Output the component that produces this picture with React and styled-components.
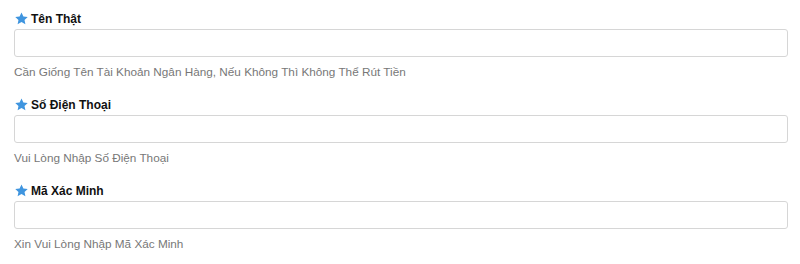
import styled, { createGlobalStyle } from "styled-components";

const Global = createGlobalStyle`
  body {
    margin: 0;
    background: #ffffff;
    font-family: "Liberation Sans", Arial, Helvetica, sans-serif;
  }
`;

const Form = styled.form`
  padding: 11px 12px 0 14px;
  display: flex;
  flex-direction: column;
`;

const Field = styled.div`
  display: flex;
  flex-direction: column;
  margin-bottom: 17px;
`;

const Label = styled.label`
  display: flex;
  align-items: center;
  gap: 3px;
  height: 16px;
  font-size: 12px;
  font-weight: bold;
  color: #111;
  svg {
    width: 13px;
    height: 13px;
    margin-left: 1px;
    margin-top: -1px;
  }
`;

const Input = styled.input`
  box-sizing: border-box;
  margin-top: 2px;
  width: 100%;
  height: 28px;
  border: 1px solid #d6d6d6;
  border-radius: 3px;
  padding: 0 8px;
  font-size: 12px;
  font-family: inherit;
  outline: none;
`;

const Help = styled.p`
  margin: 7px 0 0;
  line-height: 16px;
  font-size: 11.75px;
  color: #777;
`;

const Star = () => (
  <svg viewBox="0 0 24 24">
    <path
      fill="#3f95df"
      d="M12 .8l3.5 7.3 8 1-5.9 5.5 1.6 7.9L12 18.6l-7.2 3.9 1.6-7.9L.5 9.1l8-1z"
    />
  </svg>
);

const fields = [
  { label: "Tên Thật", help: "Cần Giống Tên Tài Khoản Ngân Hàng, Nếu Không Thì Không Thể Rút Tiền" },
  { label: "Số Điện Thoại", help: "Vui Lòng Nhập Số Điện Thoại" },
  { label: "Mã Xác Minh", help: "Xin Vui Lòng Nhập Mã Xác Minh" },
];

export default function App() {
  return (
    <>
      <Global />
      <Form>
        {fields.map((f) => (
          <Field key={f.label}>
            <Label>
              <Star />
              {f.label}
            </Label>
            <Input type="text" />
            <Help>{f.help}</Help>
          </Field>
        ))}
      </Form>
    </>
  );
}
